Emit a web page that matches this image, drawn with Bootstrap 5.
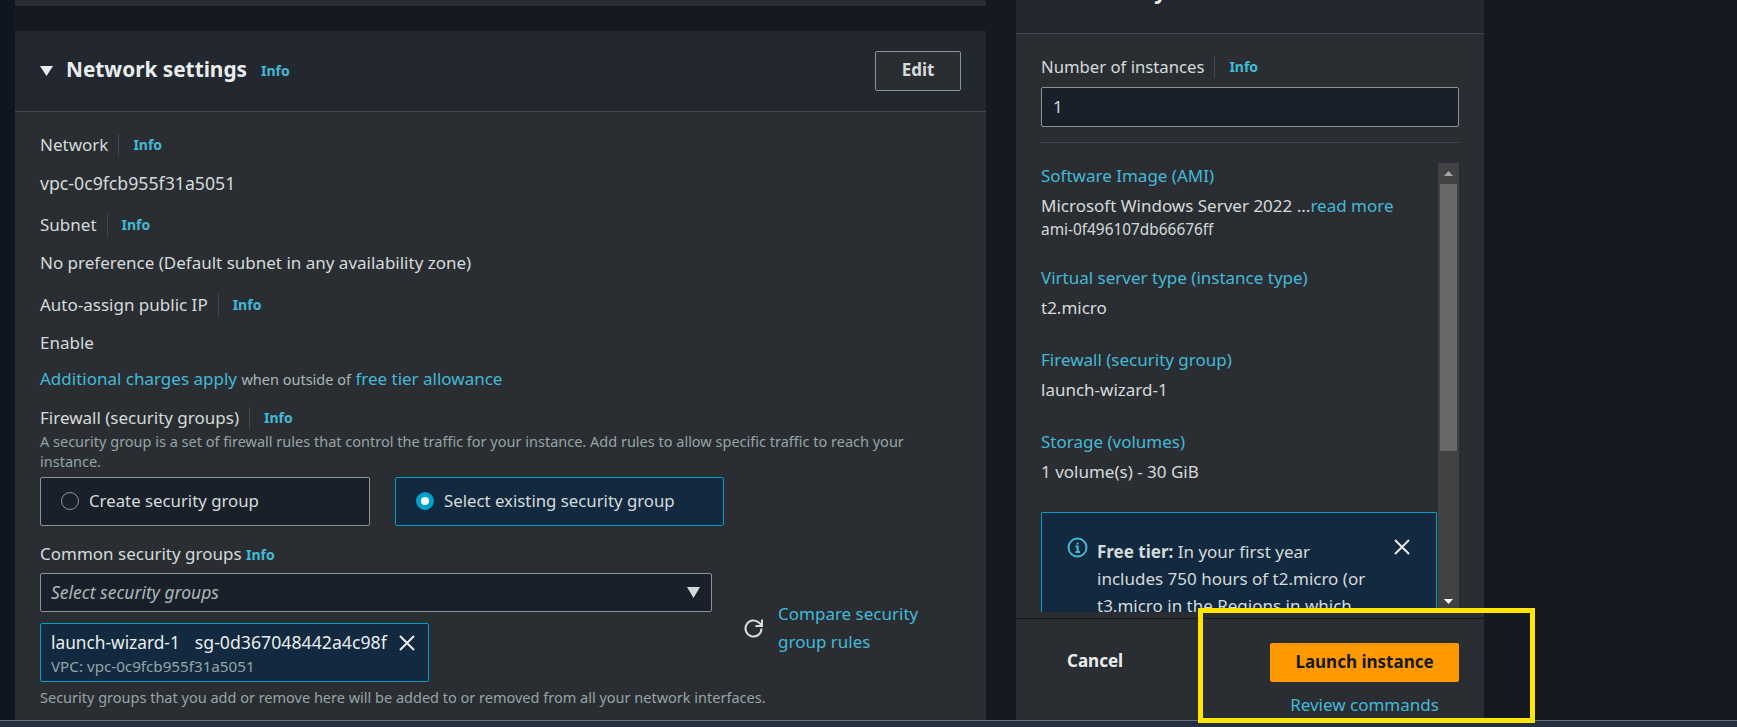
<!DOCTYPE html>
<html lang="en">
<head>
<meta charset="utf-8">
<title>Launch instance</title>
<link href="https://cdn.jsdelivr.net/npm/bootstrap@5.3.0/dist/css/bootstrap.min.css" rel="stylesheet">
<style>
html,body{height:727px;overflow:hidden}
body{background:#16191f;color:#d5dbdb;font-family:"Noto Sans","Liberation Sans",sans-serif;font-size:17px;line-height:24px;position:relative}
a{color:#44b9d6;text-decoration:none}
.page-shell{height:720px;overflow:hidden}
.side-rail{width:15px;background:#0f1620;flex:none}
.main-col{width:971px;flex:none;margin-right:30px}
.panel-stub{height:7px;background:#2a2e33;border-bottom:1px solid #14171d;margin-bottom:24px}
.net-card{background:#2a2e33;height:689px;overflow:hidden}
.net-head{height:81px;background:#232830;border-bottom:1px solid #414750;padding:0 25px;}
.net-title{font-size:20.8px;font-weight:700;color:#eaeded;margin:-4px 14px 0 13px;line-height:28px}
.caret{width:13px;height:10px;flex:none}
.edit-btn{width:86px;height:40px;border:1px solid #879596;border-radius:2px;background:#2a2e33;color:#d5dbdb;font-weight:700;font-size:17px;padding:0 0 3px;line-height:24px}
.info-tag{font-size:14px;font-weight:700;color:#44b9d6}
.net-body{padding:21px 25px 0}
.lbl-row{height:24px}
.lbl-sep{width:1px;height:22px;background:#414750;margin:0 14px 0 10px;display:inline-block}
.val-row{margin:14px 0 18px;height:24px}
.val-row.tight{margin-bottom:12px}
.id-text{font-size:17.7px}
.charges{height:24px;white-space:nowrap}
.fw-row{margin-top:15px}
.hint{font-size:14.5px;line-height:20px;color:#95a5a6}
.hint.first{margin-top:1px}
.tiny{font-size:14.5px;color:#aab7b8}
.choice{width:329px;height:49px;flex:none;border:1px solid #879596;border-radius:2px;background:#1a2029;padding:0 0 2px 20px;gap:10px;font-size:16.8px}
.choice:first-child{width:330px}
.choice.on{background:#12293f;border-color:#00a1c9}
.choice-gap{gap:25px;margin-top:6px}
.dot{width:18px;height:18px;border-radius:50%;border:1.5px solid #879596;flex:none}
.dot.on{border:5.5px solid #00a1c9;background:#fff}
.common-lbl{margin-top:16px;height:24px}
.pick-col{width:672px;flex:none}
.sel-box{height:39px;margin-top:7px;border:1px solid #879596;border-radius:2px;background:#1a2029;padding:0 11px 2px 10px}
.sel-box em{color:#aab7b8;font-size:17.5px}
.sel-tri{width:13px;height:11px;margin-top:2px}
.tok{width:389px;height:59px;margin-top:11px;background:#12293f;border:1px solid #00a1c9;border-radius:2px;padding:6px 10px 0}
.tok-top{gap:15px;line-height:25px;white-space:nowrap;color:#eaeded}
.tok-name{font-size:17.3px}
.tok-sub{font-size:15.2px;line-height:22px;color:#95a5a6}
.ico-x{width:18px;height:18px;flex:none}
.tok-top .ico-x{margin-left:-4px}
.cmp{margin-left:31px;width:190px;margin-bottom:26px}
.cmp a{line-height:28px}
.cmp svg{flex:none;width:21px;height:21px;margin-right:14px}
.help-line{margin-top:5px}
.side-panel{width:468px;background:#2a2e33;flex:none;height:720px;display:flex;flex-direction:column}
.side-head{height:34px;background:#232830;border-bottom:1px solid #414750;overflow:hidden;flex:none;padding-left:50px}
.side-title{font-size:21px;font-weight:700;color:#eaeded;line-height:28px;margin-top:-23px}
.side-main{padding:21px 25px 0;flex:none}
.count-lbl{font-size:16.7px}
.num-input{height:40px;margin-top:8px;border:1px solid #879596;border-radius:2px;background:#1a2029;padding:0 11px;line-height:38px}
.side-rule{height:1px;background:#414750;margin:15px 0 20px}
.scroller{height:449px;margin:0 25px;overflow:hidden;flex:none}
.scroll-body{flex:1;min-width:0;overflow:hidden;white-space:nowrap;padding-top:1px}
.sum-item{margin-bottom:28px}
.sum-item>div{margin-top:6px}
.sum-item small{font-size:15.4px;display:block;line-height:24px;margin-top:0;margin-bottom:-4px}
.tier{width:396px;height:150px;background:#12293f;border:1px solid #00a1c9;border-bottom:0;border-radius:2px 2px 0 0;white-space:normal;padding:25px 0 0 25px;gap:9px;color:#d5dbdb;line-height:27px;overflow:hidden}
.tier svg.ii{width:21px;height:21px;flex:none;margin-top:-1px}
.tier-text{width:272px;flex:none}
.tier .ico-x{margin:0 0 0 15px}
.sbar{width:21px;background:#424242;flex:none;display:flex;flex-direction:column;align-items:center}
.sb-btn{height:21px;width:100%;flex:none;display:flex;align-items:center;justify-content:center}
.sb-thumb{height:267px;width:17px;background:#686868;flex:none}
.sb-gap{flex:1}
.side-foot{height:102px;margin-top:6px;border-top:1px solid #16191f;padding:0 25px 0 51px;flex:none}
.cancel-txt{font-weight:700;color:#eaeded;margin-top:-17px}
.launch-col{width:189px;padding-top:24px}
.launch-btn{width:189px;height:39px;background:#f90;border:0;border-radius:2px;color:#16191f;font-weight:700;font-size:17px;padding:0 0 2px;display:block}
.review{margin-top:11px;line-height:24px;text-align:center;display:block}
.base-bar{height:7px;background:#232f3e;border-top:1px solid #687078}
.mark-box{position:absolute;left:1198px;top:608px;width:337px;height:115px;border:5px solid #ffe600;pointer-events:none}
</style>
</head>
<body>
<div class="page-shell d-flex">
  <div class="side-rail"></div>
  <div class="main-col">
    <div class="panel-stub"></div>
    <section class="net-card">
      <header class="net-head d-flex align-items-center justify-content-between">
        <div class="d-flex align-items-center">
          <svg class="caret" viewBox="0 0 13 10"><path d="M0 0h13L6.5 10z" fill="#eaeded"/></svg>
          <h2 class="net-title">Network settings</h2>
          <a class="info-tag" href="#">Info</a>
        </div>
        <button class="edit-btn" type="button">Edit</button>
      </header>
      <div class="net-body">
        <div class="lbl-row d-flex align-items-center">Network<span class="lbl-sep"></span><a class="info-tag" href="#">Info</a></div>
        <div class="val-row id-text">vpc-0c9fcb955f31a5051</div>
        <div class="lbl-row d-flex align-items-center">Subnet<span class="lbl-sep"></span><a class="info-tag" href="#">Info</a></div>
        <div class="val-row">No preference (Default subnet in any availability zone)</div>
        <div class="lbl-row d-flex align-items-center">Auto-assign public IP<span class="lbl-sep"></span><a class="info-tag" href="#">Info</a></div>
        <div class="val-row tight">Enable</div>
        <div class="charges"><a href="#">Additional charges apply</a> <span class="tiny">when outside of</span> <a href="#">free tier allowance</a></div>
        <div class="lbl-row fw-row d-flex align-items-center">Firewall (security groups)<span class="lbl-sep"></span><a class="info-tag" href="#">Info</a></div>
        <div class="hint first">A security group is a set of firewall rules that control the traffic for your instance. Add rules to allow specific traffic to reach your<br>instance.</div>
        <div class="d-flex choice-gap">
          <div class="choice d-flex align-items-center"><span class="dot"></span>Create security group</div>
          <div class="choice on d-flex align-items-center"><span class="dot on"></span>Select existing security group</div>
        </div>
        <div class="d-flex">
          <div class="pick-col">
            <div class="common-lbl">Common security groups <a class="info-tag" href="#">Info</a></div>
            <div class="sel-box d-flex align-items-center justify-content-between"><em>Select security groups</em>
              <svg class="sel-tri" viewBox="0 0 13 11"><path d="M0 0h13L6.5 11z" fill="#d5dbdb"/></svg></div>
            <div class="tok">
              <div class="tok-top d-flex align-items-center"><span class="tok-name">launch-wizard-1</span><span class="id-text">sg-0d367048442a4c98f</span>
                <svg class="ico-x" viewBox="0 0 18 18"><path d="M2 2l14 14M16 2L2 16" stroke="#eaeded" stroke-width="2" fill="none"/></svg></div>
              <div class="tok-sub">VPC: vpc-0c9fcb955f31a5051</div>
            </div>
          </div>
          <div class="cmp d-flex align-items-center align-self-end">
            <svg viewBox="0 0 21 21"><path d="M18.5 10.5a8 8 0 1 1-2.4-5.7L18.5 7" stroke="#d5dbdb" stroke-width="2" fill="none"/><path d="M19 1.5V8h-6.5" stroke="#d5dbdb" stroke-width="2" fill="none"/></svg>
            <a href="#">Compare security group rules</a>
          </div>
        </div>
        <div class="hint help-line">Security groups that you add or remove here will be added to or removed from all your network interfaces.</div>
      </div>
    </section>
  </div>
  <aside class="side-panel">
    <div class="side-head"><div class="side-title">Summary</div></div>
    <div class="side-main">
      <div class="count-lbl d-flex align-items-center">Number of instances<span class="lbl-sep"></span><a class="info-tag" href="#">Info</a></div>
      <div class="num-input">1</div>
      <div class="side-rule"></div>
    </div>
    <div class="scroller d-flex">
      <div class="scroll-body">
        <div class="sum-item"><a href="#">Software Image (AMI)</a><div>Microsoft Windows Server 2022 ...<a href="#">read more</a><small>ami-0f496107db66676ff</small></div></div>
        <div class="sum-item"><a href="#">Virtual server type (instance type)</a><div>t2.micro</div></div>
        <div class="sum-item"><a href="#">Firewall (security group)</a><div>launch-wizard-1</div></div>
        <div class="sum-item"><a href="#">Storage (volumes)</a><div>1 volume(s) - 30 GiB</div></div>
        <div class="tier d-flex align-items-start">
          <svg class="ii" viewBox="0 0 21 21"><circle cx="10.5" cy="10.5" r="9" stroke="#44b9d6" stroke-width="2" fill="none"/><path d="M10.5 5.5v2M8.5 9.5h2.2v5M8.5 15h4.5" stroke="#44b9d6" stroke-width="2" fill="none"/></svg>
          <div class="tier-text"><b>Free tier:</b> In your first year includes 750 hours of t2.micro (or t3.micro in the Regions in which t2.micro is unavailable)</div>
          <svg class="ico-x" viewBox="0 0 18 18"><path d="M2 2l14 14M16 2L2 16" stroke="#eaeded" stroke-width="2" fill="none"/></svg>
        </div>
      </div>
      <div class="sbar">
        <div class="sb-btn"><svg width="9" height="5" viewBox="0 0 9 5"><path d="M4.5 0L9 5H0z" fill="#a6a6a6"/></svg></div>
        <div class="sb-thumb"></div>
        <div class="sb-gap"></div>
        <div class="sb-btn"><svg width="9" height="5" viewBox="0 0 9 5"><path d="M0 0h9L4.5 5z" fill="#fff"/></svg></div>
      </div>
    </div>
    <div class="side-foot d-flex align-items-start justify-content-between">
      <div class="cancel-txt align-self-center">Cancel</div>
      <div class="launch-col">
        <button class="launch-btn" type="button">Launch instance</button>
        <a class="review" href="#">Review commands</a>
      </div>
    </div>
  </aside>
</div>
<div class="base-bar"></div>
<div class="mark-box"></div>
<script src="https://cdn.jsdelivr.net/npm/bootstrap@5.3.0/dist/js/bootstrap.bundle.min.js"></script>
</body>
</html>
